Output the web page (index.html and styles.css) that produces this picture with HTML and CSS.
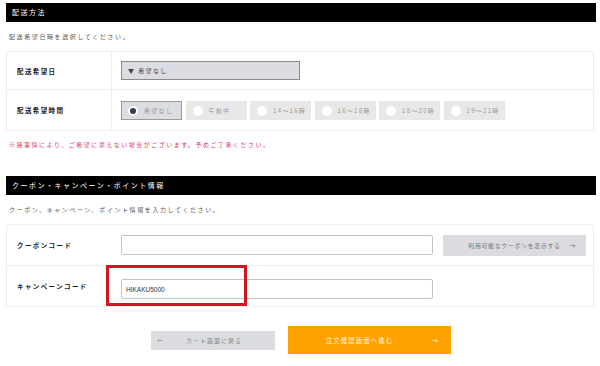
FILE: index.html
```html
<!doctype html>
<html lang="ja">
  <head>
    <meta charset="UTF-8" />
    <meta name="viewport" content="width=device-width, initial-scale=1.0" />
    <title>配送方法・クーポン</title>
    <link rel="stylesheet" href="styles.css">
  </head>
  <body>
    <div class="page">
      <h2 class="section-title">配送方法</h2>
      <p class="lead">配送希望日時を選択してください。</p>

      <div class="box">
        <div class="row">
          <div class="label">配送希望日</div>
          <div class="field">
            <div class="select">▼ 希望なし</div>
          </div>
        </div>
        <div class="row">
          <div class="label">配送希望時間</div>
          <div class="field">
            <div class="radios">
              <label class="radio checked"><span class="dot"></span>希望なし</label>
              <label class="radio"><span class="dot"></span>午前中</label>
              <label class="radio"><span class="dot"></span>14〜16時</label>
              <label class="radio"><span class="dot"></span>16〜18時</label>
              <label class="radio"><span class="dot"></span>18〜20時</label>
              <label class="radio"><span class="dot"></span>19〜21時</label>
            </div>
          </div>
        </div>
      </div>
      <p class="note">※諸事情により、ご希望に添えない場合がございます。予めご了承ください。</p>

      <h2 class="section-title second">クーポン・キャンペーン・ポイント情報</h2>
      <p class="lead">クーポン、キャンペーン、ポイント情報を入力してください。</p>

      <div class="box plain">
        <div class="row">
          <div class="label">クーポンコード</div>
          <div class="field inline">
            <input type="text" class="text-input" />
            <button type="button" class="btn-gray">利用可能なクーポンを表示する<span class="arrow">→</span></button>
          </div>
        </div>
        <div class="row">
          <div class="label">キャンペーンコード</div>
          <div class="field">
            <input type="text" class="text-input" value="HIKAKU5000" />
          </div>
          <div class="highlight"></div>
        </div>
      </div>

      <div class="actions">
        <button type="button" class="btn-back"><span class="arrow-left">←</span>カート画面に戻る</button>
        <button type="button" class="btn-next">注文確認画面へ進む<span class="arrow">→</span></button>
      </div>
    </div>
  </body>
</html>
```

FILE: styles.css
```css
body {
  margin: 0;
  background-color: #ffffff;
  color: #333333;
  font-family: "Noto Sans CJK JP", "Noto Sans", sans-serif;
}
.page {
  padding: 3px 4px 0 6px;
}
.section-title {
  margin: 0;
  height: 19px;
  line-height: 19px;
  padding-left: 6px;
  background-color: #000000;
  color: #ffffff;
  font-size: 7px;
  font-weight: normal;
  letter-spacing: 1.5px;
}
.section-title.second {
  margin-top: 17px;
}
.lead {
  margin: 0;
  height: 29px;
  line-height: 30px;
  padding-left: 3px;
  font-size: 6px;
  letter-spacing: 1.6px;
  color: #555555;
}
.box {
  width: 586px;
  border: 1px solid #eeeeee;
  border-radius: 3px;
}
.row {
  position: relative;
  display: grid;
  grid-template-columns: 105px 1fr;
  align-items: center;
}
.row + .row {
  border-top: 1px solid #eeeeee;
}
.row:first-child {
  height: 37px;
}
.row:nth-child(2) {
  height: 40px;
}
.box.plain .row {
  height: 40px;
}
.label {
  height: 100%;
  display: flex;
  align-items: center;
  padding-left: 10px;
  border-right: 1px solid #eeeeee;
  font-size: 6.5px;
  font-weight: bold;
  letter-spacing: 1.4px;
  color: #222222;
}
.box.plain .label {
  border-right: none;
}
.field {
  padding-left: 9px;
}
.select {
  width: 171px;
  height: 17px;
  line-height: 17px;
  padding-left: 6px;
  background-color: #dcdce3;
  border: 1px solid #8a8a8a;
  font-size: 6px;
  letter-spacing: 1.4px;
  color: #444444;
}
.radios {
  display: flex;
  gap: 3.5px;
  padding-top: 1px;
}
.radio {
  box-sizing: border-box;
  width: 61px;
  height: 19px;
  display: flex;
  align-items: center;
  gap: 6px;
  padding-left: 7px;
  background-color: #e8e8e8;
  font-size: 6px;
  letter-spacing: 1.3px;
  color: #999999;
}
.radio.checked {
  background-color: #dcdce3;
  border: 1px solid #9a9a9a;
  padding-left: 6px;
}
.dot {
  width: 10px;
  height: 10px;
  border-radius: 50%;
  background-color: #ffffff;
  box-sizing: border-box;
}
.radio.checked .dot {
  border: 2px solid #ffffff;
  background-color: #333a55;
}
.note {
  margin: 0;
  height: 28px;
  line-height: 28px;
  padding-left: 3px;
  font-size: 6px;
  letter-spacing: 1.5px;
  color: #e23a64;
}
.field.inline {
  display: flex;
  align-items: center;
  gap: 10px;
}
.text-input {
  box-sizing: border-box;
  width: 312px;
  height: 20px;
  padding: 0 4px;
  border: 1px solid #c4c4c4;
  border-radius: 2px;
  font-family: "Liberation Sans", Arial, sans-serif;
  font-size: 6.5px;
  color: #333333;
}
.btn-gray {
  width: 143px;
  height: 21px;
  border: none;
  background-color: #dcdce0;
  color: #777777;
  font-family: "Noto Sans CJK JP", sans-serif;
  font-size: 6px;
  letter-spacing: 0.6px;
  position: relative;
  padding: 0;
}
.arrow {
  position: absolute;
  right: 10px;
  top: 50%;
  transform: translateY(-50%);
  font-size: 6px;
  font-weight: bold;
}
.highlight {
  position: absolute;
  left: 99px;
  top: -1px;
  width: 135px;
  height: 35px;
  border: 3px solid #d01620;
}
.actions {
  display: flex;
  justify-content: center;
  align-items: center;
  gap: 13px;
  margin-top: 19px;
}
.btn-back {
  position: relative;
  width: 124px;
  height: 19px;
  border: none;
  background-color: #dcdde1;
  color: #888888;
  font-family: "Noto Sans CJK JP", sans-serif;
  font-size: 6px;
  letter-spacing: 1px;
  padding: 0 0 0 2px;
}
.arrow-left {
  position: absolute;
  left: 6px;
  top: 50%;
  transform: translateY(-50%);
  font-size: 6px;
}
.btn-next {
  position: relative;
  width: 163px;
  height: 28px;
  border: none;
  background-color: #ffa100;
  color: #fff3dc;
  font-family: "Noto Sans CJK JP", sans-serif;
  font-size: 6.5px;
  letter-spacing: 1px;
  padding: 0 20px 0 0;
}
.btn-next .arrow {
  right: 12px;
  color: #ffffff;
}
```
